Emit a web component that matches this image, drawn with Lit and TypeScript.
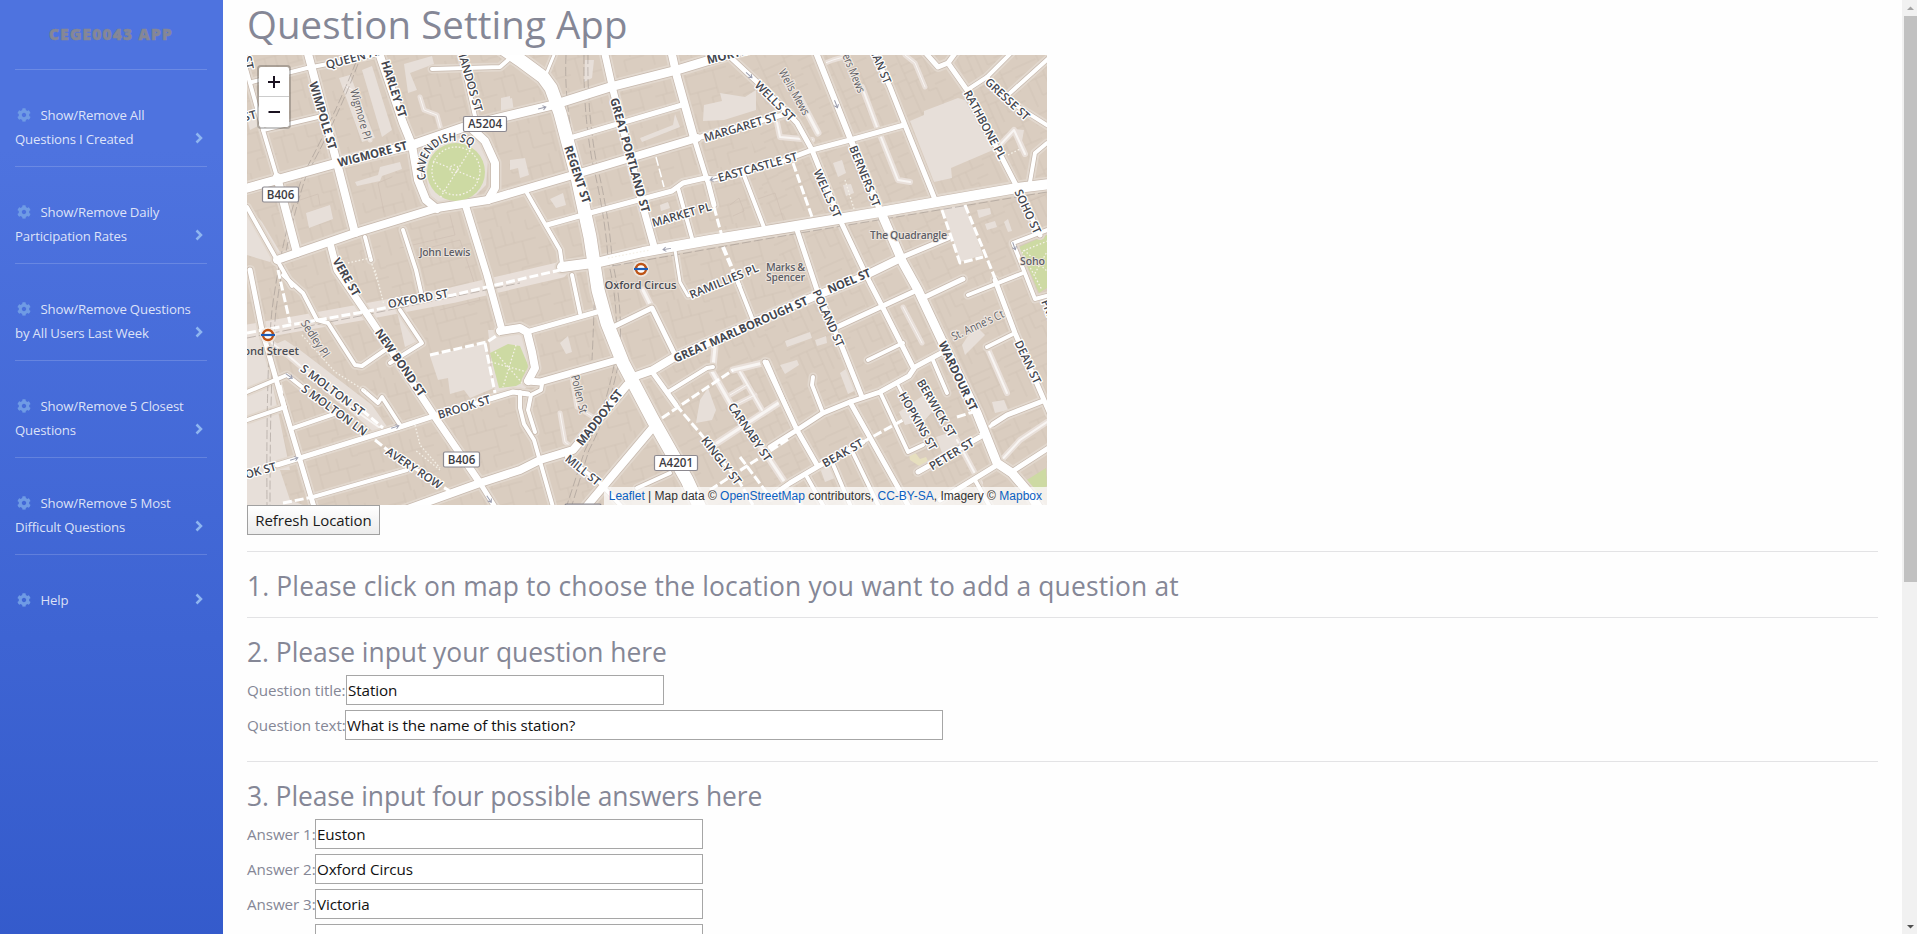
import { LitElement, html, svg, css } from "lit";
import { customElement, property } from "lit/decorators.js";

type Road = [number, string];
type Label = [string, number, number, number, number, string?];

/* Street geometry, drawn on a canvas that starts at 247,55. */
const ROADS: Road[] = [
  [8, "307,50 337,163 355,233"],
  [4, "384,50 374,55 307,68 252,82"],
  [4, "245,65 263,130 277,177"],
  [8, "277,177 297,253"],
  [4, "263,130 318,117"],
  [8, "378,50 403,123 412,145 418,180 426,200 437,209"],
  [8, "470,127 485,141 495,163 495,188 488,200"],
  [4, "460,50 477,125"],
  [4, "432,69 500,67 508,60"],
  [4, "247,207 277,260 292,286"],
  [5, "250,270 262,330 280,393 300,460 314,507"],
  [7, "330,243 337,270 373,323 437,420 480,483"],
  [5, "480,483 495,507"],
  [7, "466,207 487,275 502,330"],
  [4, "365,237 371,260"],
  [4, "403,230 416,270 421,292"],
  [3, "547,72 554,55"],
  [5, "570,138 682,105"],
  [5, "547,225 590,213 672,191 683,183 705,178 714,179 780,162 812,150 850,140 904,125"],
  [4, "678,188 692,238"],
  [4, "527,193 560,250 562,264"],
  [5, "707,178 714,205"],
  [4, "743,173 765,230"],
  [5, "728,55 757,82 780,105 797,123 812,150 840,220 870,283 883,308 913,367"],
  [6, "815,50 850,138 883,217"],
  [5, "873,50 890,87 905,125 936,202"],
  [5, "923,50 938,67 948,63 956,52"],
  [5, "948,63 967,90 1017,187 1040,235"],
  [4, "967,90 987,77 1012,52"],
  [4, "987,77 1007,100 1050,127"],
  [4, "1050,57 1010,93"],
  [4, "1030,182 1035,153 1047,143"],
  [5, "797,230 817,290 842,347 862,397"],
  [5, "900,258 948,238"],
  [4, "1047,230 1013,243 1035,299 1050,295"],
  [5, "925,297 963,279"],
  [4, "968,295 1023,273"],
  [5, "995,280 1015,333 1050,414"],
  [5, "835,328 913,292"],
  [4, "868,360 903,343"],
  [5, "770,447 797,430 823,413 850,402 865,397 880,392 909,376 915,367 943,352"],
  [5, "765,362 797,430 817,465"],
  [4, "813,377 812,385 823,413"],
  [4, "880,392 908,452 923,445"],
  [5, "850,402 909,507"],
  [4, "932,358 947,393"],
  [3, "897,383 902,393"],
  [5, "770,497 790,483 817,467 863,442"],
  [4, "807,477 824,507"],
  [4, "853,453 879,507"],
  [4, "832,462 851,507"],
  [5, "918,472 980,437"],
  [5, "993,424 1007,415 1043,401"],
  [5, "940,500 997,465"],
  [5, "1010,473 1050,447"],
  [4, "975,480 990,507"],
  [4, "987,347 1015,333"],
  [8, "500,331 520,328 527,332 532,352 535,368 528,381"],
  [7, "528,381 540,382 617,360"],
  [5, "530,331 597,312"],
  [4, "572,275 580,313"],
  [5, "613,327 652,308 675,355"],
  [5, "277,465 300,458 400,427 437,415 493,398 513,392 528,394"],
  [4, "520,392 520,408 524,424 534,440 553,507"],
  [4, "542,384 541,390 531,395 528,410 535,432"],
  [8, "405,510 480,483 520,470 540,460 573,450 627,385"],
  [8, "586,507 655,425"],
  [5, "653,373 676,405"],
  [4, "668,392 707,368 713,367"],
  [4, "637,488 670,473"],
  [4, "567,457 600,483 622,507"],
  [4, "737,280 752,318"],
  [3, "675,250 680,282 688,296 700,292"],
  [4, "283,275 303,293 317,320 328,323 355,365 362,366 385,350"],
  [4, "400,310 422,343 390,363"],
  [4, "247,392 287,375 302,387"],
  [4, "247,420 285,407"],
  [4, "293,428 337,413"],
  [4, "313,497 407,470"],
  [4, "363,390 378,403 382,397 400,425"],
  [4, "767,362 790,415"],
  [9, "240,190 337,163 412,145 470,125 553,105 610,87 677,70 720,57 760,45"],
  [8, "277,260 297,253 355,233 437,208 488,200 573,175 640,155 697,138"],
  [5, "697,138 790,113"],
  [7, "604,50 613,90 643,207 655,250"],
  [8, "671,50 677,77 694,138"],
  [5, "694,138 707,180"],
  [8, "633,377 653,370 673,358 787,308 813,297 860,278 901,258"],
  [9, "883,217 903,263 918,290 943,343 977,413 997,463 1012,473 1030,494 1040,510"],
  [10, "562,267 600,262 643,252 710,240 790,227 880,212 937,202 1017,188 1050,184"],
  [13, "502,48 520,60 543,77 551,88 560,113 577,177 590,237 598,290 607,323 623,363 653,420 687,480 701,510"],
];

const PALE: Road[] = [
  [14, "240,334 290,325 363,312 453,295 560,270"],
  [4, "268,340 290,357 340,400 383,430"],
  [4, "862,87 877,127 898,180 910,182"],
  [5, "797,93 818,133"],
  [3, "905,55 915,63 925,87"],
  [3, "903,307 922,343"],
  [4, "987,347 1007,393"],
  [4, "997,465 1020,440 1050,420"],
  [5, "710,368 730,403 770,460 800,505"],
  [5, "717,443 780,402"],
  [5, "733,370 767,362"],
  [4, "740,372 762,410"],
  [3, "730,395 747,385"],
  [3, "735,405 755,395"],
  [3, "560,413 565,442 573,448"],
  [3, "572,377 577,407 593,417"],
  [5, "643,290 652,308"],
  [5, "715,347 713,367"],
  [3, "345,86 353,90 370,140"],
  [3, "420,97 424,110 437,115 441,130"],
  [4, "775,113 780,137 812,140"],
  [4, "1000,145 1014,130 1025,154"],
  [3, "820,65 833,60 847,56"],
  [4, "957,440 980,483"],
];

const DASHED: Road[] = [
  [3, "247,333 290,325 363,312 453,295 560,270"],
  [3, "278,270 290,323"],
  [3, "430,355 487,342 502,332"],
  [3, "485,343 495,393"],
  [3, "714,207 723,240"],
  [4, "723,247 740,287"],
  [3, "793,163 812,217"],
  [3, "942,210 960,263 983,257"],
  [3, "965,205 997,283"],
  [3, "863,442 903,420"],
  [3, "980,435 993,424"],
  [3, "662,418 733,370"],
  [3, "710,490 790,438"],
  [3, "740,457 767,493"],
  [3, "676,405 700,433 740,483 753,505"],
  [3, "362,410 383,428"],
  [3, "375,440 390,452 440,485 451,492"],
  [3, "280,385 285,407"],
  [3, "957,417 973,412"],
  [1.5, "656,157 664,187"],
  [3, "283,503 313,497"],
];

const PATCHES = [
  "910,121 924,115 924,111 958,98 965,100 993,150 951,168 952,178 934,182",
  "943,208 965,205 983,255 960,262",
  "247,335 262,333 290,470 280,470 290,500 303,505 247,505",
  "397,311 402,307 420,340 405,347",
  "430,356 486,343 494,388 470,398 464,390 450,394 448,378 438,380",
  "262,350 285,340 300,350 372,405 388,428 378,436 290,358",
  "488,330 530,330 533,380 520,394 495,395",
  "420,150 440,137 478,138 488,160 486,185 475,196 440,203 430,195",
  "306,213 330,205 333,219 309,228",
  "355,182 378,175 380,167 400,162 402,169 382,176 380,181 357,186",
  "339,78 350,75 375,138 362,142",
  "362,70 372,66 392,130 382,137",
  "404,64 432,56 434,64 410,73 417,90 408,93",
  "501,98 510,96 510,110 501,112",
  "704,105 722,101 720,93 745,97 756,90 756,110 724,120 703,121",
  "640,138 673,125 675,114 680,127 642,142",
  "833,163 842,160 846,173 838,177",
  "843,185 851,184 854,193 846,196",
  "899,412 928,392 938,405 925,420 905,425",
  "936,437 957,430 960,445 943,455",
  "700,400 708,388 716,410 712,420 696,423",
  "710,347 717,346 715,360",
  "975,325 985,335 965,355 962,345",
  "992,402 1004,400 1008,410 995,413",
  "780,365 797,360 799,365 785,374",
  "785,341 810,332 812,338 787,347",
  "840,373 850,366 856,390 848,394",
  "815,340 826,336 827,343 817,346",
  "247,205 262,222 280,252 270,262 247,255",
  "560,343 568,336 572,352 566,354",
  "585,60 594,60 592,78 584,82",
  "510,160 525,158 529,175 520,178 518,168 510,170",
  "550,199 563,193 566,205 556,208",
  "977,210 990,208 991,214 979,218",
  "985,224 995,221 997,227 987,230",
  "1004,222 1008,219 1012,231 1008,232",
  "820,468 832,465 835,478 825,482",
  "1020,152 1024,130 1012,129",
  "247,118 257,112 262,124 250,130",
  "504,100 512,98 514,112 503,114",
  "660,205 668,202 670,208 661,211",
];

const YARDS = [
  "392,177 378,183 384,212",
  "300,180 315,175 333,165",
  "300,200 318,194 320,205",
  "450,215 455,235 400,248",
  "420,250 460,240 480,300 440,310",
  "730,205 739,198 744,211 733,216",
  "1020,205 1045,195",
  "755,200 775,193 785,225",
];

const LABELS: Label[] = [
  ["WIMPOLE ST", 313, 82, 333, 149, "b"],
  ["HARLEY ST", 385, 61, 403, 117, "b"],
  ["CHANDOS ST", 459, 42, 479, 111],
  ["QUEEN ANNE ST", 326, 65, 416, 41],
  ["Wigmore Pl", 354, 89, 368, 139, "g"],
  ["WIGMORE ST", 338, 163, 407, 145, "b"],
  ["VERE ST", 336, 259, 357, 295, "b"],
  ["REGENT ST", 568, 146, 587, 203, "b"],
  ["GREAT PORTLAND ST", 614, 98, 646, 212, "b"],
  ["MORTIMER ST", 707, 60, 783, 41, "b"],
  ["MARGARET ST", 704, 138, 777, 116],
  ["EASTCASTLE ST", 718, 178, 797, 156],
  ["MARKET PL", 652, 223, 711, 206],
  ["WELLS ST", 757, 83, 793, 119],
  ["Wells Mews", 782, 70, 807, 114, "g"],
  ["Berners Mews", 838, 35, 862, 92, "g"],
  ["NEWMAN ST", 863, 24, 888, 83],
  ["RATHBONE PL", 967, 91, 1003, 158],
  ["GRESSE ST", 987, 80, 1028, 118],
  ["BERNERS ST", 853, 146, 877, 206],
  ["WELLS ST", 817, 170, 838, 217],
  ["SOHO ST", 1018, 190, 1038, 233],
  ["NOEL ST", 828, 290, 870, 272, "b"],
  ["RAMILLIES PL", 690, 295, 758, 267],
  ["OXFORD ST", 388, 304, 448, 293],
  ["NEW BOND ST", 378, 330, 423, 395, "b"],
  ["Sedley Pl", 304, 321, 327, 356, "g"],
  ["S MOLTON ST", 302, 367, 363, 413],
  ["S MOLTON LN", 303, 387, 366, 433],
  ["BROOK ST", 222, 481, 276, 466],
  ["BROOK ST", 438, 415, 490, 399],
  ["AVERY ROW", 387, 450, 441, 486],
  ["MADDOX ST", 579, 444, 620, 391, "b"],
  ["Pollen St", 575, 375, 584, 413, "g"],
  ["MILL ST", 567, 457, 599, 483],
  ["GREAT MARLBOROUGH ST", 674, 359, 807, 300, "b"],
  ["KINGLY ST", 704, 438, 739, 483],
  ["CARNABY ST", 731, 404, 769, 460],
  ["BEAK ST", 823, 464, 862, 442],
  ["HOPKINS ST", 902, 393, 934, 449],
  ["BERWICK ST", 920, 380, 953, 436],
  ["PETER ST", 930, 467, 973, 441],
  ["WARDOUR ST", 942, 342, 974, 410, "b"],
  ["St. Anne's Ct", 952, 337, 1003, 313, "g"],
  ["DEAN ST", 1018, 341, 1038, 383],
  ["POLAND ST", 816, 290, 841, 346],
  ["FRITH ST", 1045, 300, 1063, 345],
  ["WELBECK ST", 235, 0, 250, 69],
  ["BENTINCK ST", 184, 134, 256, 114],
];

const SHIELDS: [string, number, number, number][] = [
  ["A5204", 463.5, 116.5, 43],
  ["B406", 262.5, 187, 36],
  ["B406", 443.5, 452, 36],
  ["A4201", 654.5, 455.5, 43],
  ["", 565, 504.2, 36],
];

const ARROWS: [number, number, number][] = [
  [542, 108, -15], [714, 179, 166], [667, 249, 171], [749, 75, 42],
  [836, 104, 68], [395, 427, -17], [294, 459, -17], [289, 376, 35], [489, 499, 56], [1014, 246, 70],
];

@customElement("street-map")
class StreetMap extends LitElement {
  static styles = css`
    :host { display: block; position: relative; width: 800px; height: 450px; overflow: hidden; background: #dacdc0; }
    svg.canvas { display: block; width: 800px; height: 450px; }
    polyline { fill: none; stroke-linejoin: round; stroke-linecap: round; }
    .shade { stroke: #c6b8ad; }
    .road { stroke: #fff; }
    .pale { stroke: #e9e0da; }
    .verge { stroke: #e2d8ce; }
    .inner { stroke: #f8f5f3; }
    .dash { stroke: #fff; stroke-linecap: butt; stroke-dasharray: 9 3; }
    .dots { fill: none; stroke: #f5f1e8; stroke-width: 1.3; stroke-dasharray: 1.6 2; }
    .patch { fill: #e7dfd9; }
    .green { fill: #cddaa3; }
    .plot { fill: none; stroke: #cdbeb1; stroke-width: 0.6; }
    .rail { fill: none; stroke: #9b928c; stroke-width: 0.9; stroke-dasharray: 9 3; opacity: 0.6; }
    text {
      font-family: "Open Sans", "Noto Sans", sans-serif; font-size: 11.5px; font-weight: 600; fill: #44464e;
      stroke: #fff; stroke-width: 2.6px; stroke-linejoin: round; paint-order: stroke;
    }
    .b { font-weight: 700; font-size: 11.8px; }
    .g { font-weight: 400; font-size: 11.5px; fill: #5b5c63; stroke: #eee7e1; }
    .place { font-size: 10.6px; fill: #5d5e66; stroke: #ebe3dc; stroke-width: 2px; }
    .station { fill: #4a4c54; font-size: 11.3px; }
    .sign { fill: #fff; stroke: #8c8990; stroke-width: 1.2; }
    .ref { stroke: none; font-size: 11.6px; fill: #3d3c43; }
    .arrow { fill: none; stroke: #9a9cad; stroke-width: 1; }
    .controls {
      position: absolute; left: 10px; top: 10px; width: 30px; border: 2px solid rgba(0, 0, 0, 0.22);
      border-radius: 4px; background: #fff; background-clip: padding-box;
    }
    .zoom { display: flex; align-items: center; justify-content: center; height: 29px; }
    .zoom + .zoom { border-top: 1px solid #ccc; height: 30px; }
    .zoom svg { width: 14px; height: 14px; display: block; }
    .credit {
      position: absolute; right: 0; bottom: 0; padding: 0 5px; height: 18px; background: rgba(255, 255, 255, 0.7);
      font: 12px/18px "Liberation Sans", Arial, sans-serif; color: #333; white-space: nowrap;
    }
    .link { color: #0a60c2; }
  `;

  private label([text, x1, y1, x2, y2, kind]: Label) {
    const angle = (Math.atan2(y2 - y1, x2 - x1) * 180) / Math.PI;
    const length = Math.hypot(x2 - x1, y2 - y1);
    return svg`<text class=${kind ?? ""} transform="translate(${x1} ${y1}) rotate(${angle})" y="4.2"
      textLength=${length} lengthAdjust="spacingAndGlyphs">${text}</text>`;
  }

  private station(x: number, y: number) {
    return svg`<g transform="translate(${x} ${y})">
      <circle r="8" fill="#f3ece6" opacity=".8"/>
      <circle r="5" fill="#fff" stroke="#bd5315" stroke-width="2.4"/>
      <rect x="-7" y="-1.1" width="14" height="2.2" fill="#1c5bb5"/></g>`;
  }

  render() {
    return html`
      <svg class="canvas" viewBox="247 55 800 450">
        <defs>
          <pattern id="plots-w" width="76" height="58" patternUnits="userSpaceOnUse" patternTransform="rotate(-15)">
            <path class="plot" d="M0 9H34M12 9V31M23 9V24M34 0V38M0 31H21M8 31V58M34 20H76M45 20V0M54 20V8M62 20V44M34 38H62M42 38V58M21 31V49H42M55 58V46H76M70 0V10H76"/>
          </pattern>
          <pattern id="plots-e" width="64" height="52" patternUnits="userSpaceOnUse" patternTransform="rotate(-24)">
            <path class="plot" d="M0 7H26M0 16H20M0 25H28M28 0V52M28 11H52M28 19H47M28 30H64M52 0V30M52 8H64M9 25V52M18 25V43H28M36 30V52M44 30V45M52 41H64M44 45H52V52"/>
          </pattern>
        </defs>
        <path fill="url(#plots-w)" d="M247 55H730L790 300L640 370L700 505H247Z"/>
        <path fill="url(#plots-e)" d="M730 55H1047V505H700L640 370L790 300Z"/>
        ${PATCHES.map((p) => svg`<polygon class="patch" points=${p}/>`)}
        ${YARDS.map((p) => svg`<polyline class="plot" points=${p}/>`)}
        <polygon class="green" points="490,353 508,344 520,346 528,365 527,380 516,386 499,388"/>
        <path class="dots" d="M495 352L523 384M516 345L503 387M491 362L527 372"/>
        <polygon class="green" points="1019,247 1047,235 1047,288 1039,293"/>
        <path class="dots" d="M1023 251L1050 240M1022 252L1042 290M1024 250L1048 272M1048 250L1034 275"/>
        <polygon class="green" points="1022,483 1046,468 1047,486 1028,496"/>
        <path d="M909 453L914 451L920 459L926 457L930 465L924 469L910 460Z" fill="#e6dfbe"/>

        ${PALE.map(([w, p]) => svg`<polyline class="pale" points=${p} stroke-width=${w + 2}/>`)}
        ${PALE.slice(1).map(([w, p]) => svg`<polyline class="inner" points=${p} stroke-width=${w - 2}/>`)}
        ${ROADS.map(([w, p]) => svg`<polyline class="verge" points=${p} stroke-width=${w + 5}/>`)}
        <path class="rail" d="M356 62Q335 115 303 175Q282 235 272 310Q266 370 267 505"/>
        <path class="rail" d="M358 64Q338 117 306 176Q286 237 276 310Q270 370 270 505"/>
        <path class="rail" d="M566 55Q564 100 575 150Q592 215 595 270Q594 320 592 360"/>
        <path class="rail" d="M584 55Q583 110 592 160Q606 220 608 260Q620 310 615 360Q606 410 585 450L567 505"/>
        <path class="rail" d="M588 55Q587 110 596 160Q610 220 612 260Q624 310 619 360Q610 410 589 450L572 505"/>
        <path class="rail" d="M247 338L360 316L520 283"/>
        <path class="rail" d="M612 266L800 233L1047 192"/>
        ${ROADS.map(([w, p]) => svg`<polyline class="shade" points=${p} stroke-width=${w + 1.4}/>`)}
        <circle class="green" cx="456" cy="172" r="29"/>
        <circle class="dots" cx="456" cy="171" r="24"/>
        <path class="dots" d="M470 150L440 198M433 161L479 180"/>
        <circle class="dots" cx="454" cy="169" r="4"/>
        ${ROADS.map(([w, p]) => svg`<polyline class="road" points=${p} stroke-width=${w}/>`)}
        ${DASHED.map(([w, p]) => svg`<polyline class="dash" points=${p} stroke-width=${w}/>`)}
        <path class="dots" d="M348 263L370 258L377 280M375 270L384 305M302 335L335 372L367 392M415 425L420 445L440 468M440 470L415 450M845 180L855 212M1008 155L1022 148M608 258L650 250"/>
        ${ARROWS.map(([x, y, a]) => svg`<path class="arrow" transform="translate(${x} ${y}) rotate(${a})" d="M-4 0H3M1 -2.2L4 0L1 2.2"/>`)}

        ${SHIELDS.map(
          ([t, x, y, w]) => svg`<rect class="sign" x=${x} y=${y} width=${w} height="15" rx="1.5"/>
            <text class="ref" x=${x + w / 2} y=${y + 11.8} text-anchor="middle">${t}</text>`,
        )}
        ${LABELS.map((l) => this.label(l))}
        <path id="square" fill="none" d="M426.500 179A29 29 0 0 1 474 149"/>
        <text><textPath href="#square" textLength="73" lengthAdjust="spacingAndGlyphs">CAVENDISH SQ</textPath></text>
        <text class="place" x="419.5" y="255.5" textLength="51">John Lewis</text>
        <text class="place" x="870" y="238.5" textLength="77">The Quadrangle</text>
        <text class="place" x="1020" y="264.5" textLength="25">Soho</text>
        <text class="place" x="766" y="270.5" textLength="39">Marks &amp;</text>
        <text class="place" x="766" y="280.5" textLength="39">Spencer</text>
        <text class="place station" x="604.5" y="289" textLength="72">Oxford Circus</text>
        <text class="place station" x="236" y="354.5" textLength="63">Bond Street</text>
        ${this.station(641, 269)} ${this.station(268, 335)}
      </svg>
      <div class="controls">
        <div class="zoom"><svg viewBox="0 0 14 14"><path d="M1 7H13M7 1V13" stroke="#1a1220" stroke-width="2"/></svg></div>
        <div class="zoom"><svg viewBox="0 0 14 14"><path d="M1.500 7H13" stroke="#1a1220" stroke-width="2"/></svg></div>
      </div>
      <div class="credit"><span class="link">Leaflet</span> | Map data © <span class="link">OpenStreetMap</span> contributors, <span class="link">CC-BY-SA</span>, Imagery © <span class="link">Mapbox</span></div>
    `;
  }
}

const MENU: string[][] = [
  ["Show/Remove All", "Questions I Created"],
  ["Show/Remove Daily", "Participation Rates"],
  ["Show/Remove Questions", "by All Users Last Week"],
  ["Show/Remove 5 Closest", "Questions"],
  ["Show/Remove 5 Most", "Difficult Questions"],
  ["Help"],
];

@customElement("side-menu")
class SideMenu extends LitElement {
  static styles = css`
    :host {
      display: block; width: 223px; height: 934px; flex: none; box-sizing: border-box; padding: 0 15px;
      background: linear-gradient(180deg, #4e73df 10%, #224abe 100%) top / 100% 1491px;
      font-family: "Open Sans", "Noto Sans", sans-serif;
    }
    .brand {
      height: 69px; display: flex; align-items: center; justify-content: center; box-sizing: border-box;
      color: #858796; font-size: 15.5px; font-weight: 800; letter-spacing: 1.2px; padding: 0 1px 2px 0;
      -webkit-text-stroke: 0.5px #858796;
    }
    .item {
      display: flex; align-items: flex-end; justify-content: space-between; width: 192px; box-sizing: border-box;
      border-top: 1px solid rgba(255, 255, 255, 0.17); padding: 33px 4px 15px 0;
      color: rgba(255, 255, 255, 0.82); font-size: 13.2px; letter-spacing: -0.17px; line-height: 24px; white-space: nowrap;
    }
    .text { width: 178px; flex: none; }
    .line { display: flex; align-items: center; height: 24px; }
    .gear { width: 14px; height: 14px; margin: 0 9.5px 0 2px; fill: #6f9be5; flex: none; }
    .chevron { width: 8px; height: 12px; margin-bottom: 7px; fill: none; stroke: #8fb6f0; stroke-width: 2.5; }
  `;

  render() {
    return html`
      <div class="brand">CEGE0043 APP</div>
      ${MENU.map(
        (lines) => html`<div class="item">
          <div class="text">
            ${lines.map(
              (line, i) => html`<div class="line">
                ${i === 0
                  ? html`<svg class="gear" viewBox="0 0 512 512"><path d="M487.4 315.7l-42.6-24.6c4.3-23.2 4.3-47 0-70.2l42.6-24.6c4.9-2.8 7.1-8.600 5.500-14-11.100-35.600-30-67.800-54.700-94.600-3.800-4.100-10-5.100-14.800-2.300L380.800 110c-17.900-15.400-38.500-27.300-60.800-35.100V25.800c0-5.600-3.900-10.500-9.400-11.700-36.700-8.200-74.300-7.800-109.200 0-5.500 1.200-9.400 6.100-9.400 11.700V75c-22.200 7.900-42.800 19.800-60.800 35.100L88.700 85.500c-4.900-2.800-11-1.900-14.800 2.300-24.700 26.700-43.600 58.900-54.700 94.600-1.700 5.400.6 11.200 5.500 14L67.300 221c-4.300 23.200-4.300 47 0 70.200l-42.600 24.600c-4.900 2.800-7.100 8.600-5.500 14 11.100 35.600 30 67.800 54.700 94.600 3.800 4.100 10 5.100 14.800 2.300l42.600-24.600c17.900 15.400 38.500 27.300 60.800 35.100v49.200c0 5.600 3.900 10.500 9.400 11.700 36.700 8.200 74.300 7.800 109.200 0 5.500-1.200 9.400-6.100 9.400-11.700v-49.200c22.200-7.900 42.800-19.800 60.800-35.100l42.600 24.600c4.900 2.800 11 1.900 14.800-2.300 24.700-26.700 43.600-58.900 54.700-94.600 1.500-5.500-.7-11.300-5.600-14.100zM256 336c-44.100 0-80-35.900-80-80s35.900-80 80-80 80 35.900 80 80-35.900 80-80 80z"/></svg>`
                  : ""}<span>${line}</span>
              </div>`,
            )}
          </div>
          <svg class="chevron" viewBox="0 0 8 12"><path d="M1.500 1.500L6 6L1.500 10.500"/></svg>
        </div>`,
      )}
    `;
  }
}

@customElement("labelled-input")
class LabelledInput extends LitElement {
  @property() label = "";
  @property() value = "";
  @property({ type: Number }) labelWidth = 68;
  @property({ type: Number }) fieldWidth = 388;

  static styles = css`
    :host { display: flex; align-items: center; height: 30px; margin-bottom: 5px; font-size: 15.2px; white-space: nowrap; }
    .label { flex: none; color: #858796; letter-spacing: -0.08px; }
    .field {
      box-sizing: border-box; height: 30px; line-height: 29px; border: 1px solid #a6a6a6; padding: 0 0 0 1px;
      background: #fff; color: #111; letter-spacing: -0.08px;
    }
  `;

  render() {
    return html`<span class="label" style="width:${this.labelWidth}px">${this.label}</span>
      <div class="field" style="width:${this.fieldWidth}px">${this.value}</div>`;
  }
}

@customElement("app-root")
class AppRoot extends LitElement {
  static styles = css`
    :host {
      display: flex; height: 934px; overflow: hidden; background: #fefefe; color: #858796;
      font-family: "Open Sans", "Noto Sans", sans-serif;
    }
    .content { flex: 1; min-width: 0; padding: 0 24px; overflow: hidden; }
    h1 { margin: 0 0 8px; height: 47px; line-height: 49px; font-size: 38.4px; font-weight: 400; letter-spacing: 0.1px; }
    h3 { margin: 0 0 8px; height: 33px; line-height: 37px; font-size: 26.4px; font-weight: 400; white-space: nowrap; }
    .first { letter-spacing: 0.15px; }
    .second { letter-spacing: -0.03px; }
    .third { letter-spacing: -0.09px; }
    .rule { height: 1px; margin: 16px 0; background: #e3e3e5; }
    .rule.after { margin-top: 21px; }
    .button {
      display: flex; align-items: center; justify-content: center; box-sizing: border-box; width: 133px; height: 30px;
      border: 1px solid #a0a0a0; background: linear-gradient(#fff, #ececec); color: #1a1a1a; font-size: 15px;
      letter-spacing: -0.05px;
    }
    .scroll {
      flex: none; width: 15px; height: 934px; background: #f1f1f1; display: flex; flex-direction: column; align-items: flex-end;
    }
    .thumb { width: 13px; height: 566px; background: #c1c1c1; }
    .scroll svg { width: 13px; height: 16px; display: block; }
    .scroll .down { margin-top: auto; }
  `;

  render() {
    return html`
      <side-menu></side-menu>
      <div class="content">
        <h1>Question Setting App</h1>
        <street-map></street-map>
        <div class="button">Refresh Location</div>
        <div class="rule"></div>
        <h3 class="first">1. Please click on map to choose the location you want to add a question at</h3>
        <div class="rule"></div>
        <h3 class="second">2. Please input your question here</h3>
        <labelled-input label="Question title:" value="Station" .labelWidth=${99} .fieldWidth=${318}></labelled-input>
        <labelled-input label="Question text:" value="What is the name of this station?" .labelWidth=${98} .fieldWidth=${598}></labelled-input>
        <div class="rule after"></div>
        <h3 class="third">3. Please input four possible answers here</h3>
        ${["Euston", "Oxford Circus", "Victoria", ""].map(
          (v, i) => html`<labelled-input label="Answer ${i + 1}:" value=${v}></labelled-input>`,
        )}
      </div>
      <div class="scroll">
        <svg viewBox="0 0 13 16"><path d="M3 10H10L6.500 6.500Z" fill="#a3a3a3"/></svg>
        <div class="thumb"></div>
        <svg class="down" viewBox="0 0 13 16"><path d="M3 7H10L6.500 10.500Z" fill="#505050"/></svg>
      </div>
    `;
  }
}
